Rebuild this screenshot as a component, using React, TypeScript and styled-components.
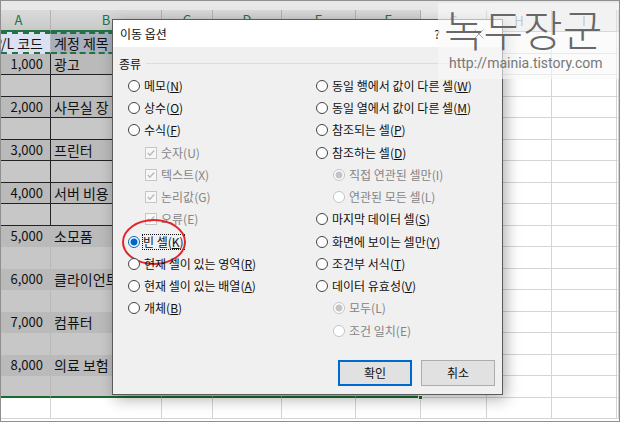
import React from 'react';
import styled, { createGlobalStyle, css } from 'styled-components';

const GlobalStyle = createGlobalStyle`
  * { box-sizing: border-box; }
  body {
    margin: 0;
    background: #fff;
    color: #111;
    font-family: "Noto Sans CJK KR", "Noto Sans", sans-serif;
    font-size: 12px;
  }
`;

const Workspace = styled.main`
  position: relative;
  min-height: 100vh;
  overflow: hidden;
  border: 1px solid #8f8f8f;
  border-width: 1px;
  background: #fff;
`;

const RibbonEdge = styled.div`
  height: 9px;
  background: #e8e8e8;
`;

const Sheet = styled.table`
  width: 100%;
  table-layout: fixed;
  border-collapse: separate;
  border-spacing: 0;
`;

const Column = styled.col<{ $width?: number }>`
  width: ${(p) => (p.$width ? `${p.$width}px` : 'auto')};
`;

const ColumnHead = styled.th<{ $selected?: boolean }>`
  height: 22px;
  padding: 0;
  overflow: hidden;
  font-size: 13px;
  line-height: 18px;
  font-weight: 400;
  color: ${(p) => (p.$selected ? '#217346' : '#6c7c92')};
  background: ${(p) => (p.$selected ? 'linear-gradient(#dadada, #c9c9c9)' : '#e9e9e9')};
  border-right: 1px solid #b2b2b2;
  border-bottom: ${(p) => (p.$selected ? '2px solid #217346' : '1px solid #a8a8a8')};
  &:first-child { padding-right: 14px; }
`;

type CellKind = 'title' | 'dark' | 'light' | 'blank';

const fills: Record<CellKind, string> = {
  title: '#a9afbd',
  dark: '#bababa',
  light: '#c7c7c7',
  blank: '#fff',
};

const SheetRow = styled.tr`
  height: 22px;
  &:nth-child(even) { height: 21px; }
`;

const Cell = styled.td<{ $kind: CellKind; $number?: boolean; $ruled?: boolean; $last?: boolean }>`
  height: inherit;
  padding: 0 7px 0 3px;
  overflow: hidden;
  white-space: nowrap;
  font-size: ${(p) => (p.$number ? 13 : 14)}px;
  line-height: 18px;
  text-align: ${(p) => (p.$number ? 'right' : 'left')};
  background: ${(p) => fills[p.$kind]};
  border-right: 1px solid ${(p) => (p.$ruled ? '#222' : p.$kind === 'blank' ? '#d4d4d4' : '#b8b8b8')};
  border-bottom: 1px solid
    ${(p) => (p.$ruled ? '#222' : p.$kind === 'blank' ? '#d4d4d4' : 'transparent')};
  ${(p) =>
    p.$kind === 'title' &&
    css`
      border-top: 2px dashed #217346;
      border-bottom: 2px dashed #217346;
      line-height: 17px;
    `}
  ${(p) => p.$last && css`border-bottom: 2px solid #1c6b2e;`}
  &:first-child {
    ${(p) => p.$kind === 'title' && css`background: #dbe1f2;`}
  }
`;

const ClippedTitle = styled.span`
  display: flex;
  justify-content: flex-end;
`;

const FillHandle = styled.span`
  position: absolute;
  left: 417px;
  top: 394px;
  width: 5px;
  height: 5px;
  border: 1px solid #fff;
  background: #1c6b2e;
`;

const Dialog = styled.section`
  position: absolute;
  top: 18px;
  left: 111px;
  right: 116px;
  border: 1px solid #5b5b5b;
  background: #f0f0f0;
  box-shadow: 3px 4px 14px rgba(0, 0, 0, 0.32);
`;

const TitleBar = styled.header`
  display: flex;
  align-items: center;
  height: 27px;
  padding: 0 16px 0 7px;
  background: #fff;
`;

const DialogTitle = styled.h1`
  flex: 1;
  margin: 0;
  font-size: 12px;
  font-weight: 400;
`;

const TitleButton = styled.button`
  display: flex;
  align-items: center;
  justify-content: center;
  width: 14px;
  height: 20px;
  margin-left: 28px;
  padding: 0;
  border: 0;
  background: none;
  color: #222;
  font: inherit;
`;

const Group = styled.fieldset`
  margin: 0;
  padding: 7px 7px 0 6px;
  border: 0;
`;

const GroupTitle = styled.div`
  display: flex;
  align-items: center;
  gap: 5px;
  height: 18px;
  &::after {
    content: "";
    flex: 1;
    border-top: 1px solid #dcdcdc;
  }
`;

const Columns = styled.div`
  display: grid;
  grid-template-columns: 188px 1fr;
  padding: 3px 0 0 9px;
`;

const OptionList = styled.div`
  display: flex;
  flex-direction: column;
`;

const Option = styled.label<{ $nested?: boolean; $disabled?: boolean }>`
  position: relative;
  display: flex;
  align-items: center;
  gap: 4px;
  height: 22px;
  padding-left: ${(p) => (p.$nested ? 17 : 0)}px;
  color: ${(p) => (p.$disabled ? '#858585' : '#111')};
  white-space: nowrap;
  &:nth-child(4n + 3) { margin-bottom: 1px; }
`;

const Radio = styled.input.attrs({ type: 'radio' })`
  appearance: none;
  flex: none;
  width: 12px;
  height: 12px;
  margin: 0;
  border: 1px solid #444;
  border-radius: 50%;
  background: #fff;
  &:checked {
    border-color: #0067c5;
    background: radial-gradient(circle, #0067c5 0 3px, #fff 4px);
  }
  &:disabled { border-color: #c4c4c4; }
  &:disabled:checked { background: radial-gradient(circle, #c4c4c4 0 3px, #fff 4px); }
`;

const CheckWrap = styled.span`
  display: grid;
  flex: none;
  width: 12px;
  height: 12px;
  > * { grid-area: 1 / 1; }
`;

const Checkbox = styled.input.attrs({ type: 'checkbox' })`
  appearance: none;
  width: 12px;
  height: 12px;
  margin: 0;
  border: 1px solid #c6c6c6;
  background: #f7f7f7;
`;

const OptionText = styled.span<{ $focused?: boolean }>`
  line-height: 16px;
  ${(p) => p.$focused && css`
    margin-left: -2px;
    padding: 0 1px;
    outline: 1px dotted #111;
    outline-offset: -1px;
  `}
`;

const Highlight = styled.svg`
  position: absolute;
  left: -7px;
  top: -13px;
  width: 66px;
  height: 48px;
  pointer-events: none;
`;

const Actions = styled.footer`
  display: flex;
  justify-content: flex-end;
  gap: 9px;
  padding: 18px 7px 8px;
`;

const ActionButton = styled.button<{ $primary?: boolean }>`
  width: 74px;
  height: 26px;
  padding: 0;
  border: ${(p) => (p.$primary ? '2px solid #0069d0' : '1px solid #adadad')};
  background: #e1e1e1;
  color: #111;
  font: inherit;
  line-height: 20px;
`;

const Watermark = styled.aside`
  position: absolute;
  top: 2px;
  right: 0;
  width: 181px;
  height: 76px;
  padding-left: 6px;
  background: rgba(248, 248, 248, 0.6);
  white-space: nowrap;
`;

const Brand = styled.div`
  height: 51px;
  color: #686868;
  font-size: 43px;
  line-height: 51px;
  font-weight: 300;
`;

const SiteLink = styled.a`
  display: block;
  margin-left: 5px;
  color: #777;
  font-family: Roboto, "Liberation Sans", sans-serif;
  font-size: 14px;
  line-height: 18px;
  font-weight: 400;
  text-decoration: none;
`;

const columns: [string, number][] = [
  ['A', 50], ['B', 111], ['C', 51], ['D', 69], ['E', 74], ['F', 65], ['G', 66], ['H', 65], ['I', 65],
];

const accounts = ['광고', '사무실 장', '프린터', '서버 비용', '소모품', '클라이언트', '컴퓨터', '의료 보험'];

interface OptionItem {
  text: string;
  hotkey: string;
  kind?: 'check' | 'radio';
  disabled?: boolean;
  checked?: boolean;
  group?: string;
}

const leftOptions: OptionItem[] = [
  { text: '메모', hotkey: 'N' },
  { text: '상수', hotkey: 'O' },
  { text: '수식', hotkey: 'F' },
  { text: '숫자', hotkey: 'U', kind: 'check', disabled: true },
  { text: '텍스트', hotkey: 'X', kind: 'check', disabled: true },
  { text: '논리값', hotkey: 'G', kind: 'check', disabled: true },
  { text: '오류', hotkey: 'E', kind: 'check', disabled: true },
  { text: '빈 셀', hotkey: 'K', checked: true },
  { text: '현재 셀이 있는 영역', hotkey: 'R' },
  { text: '현재 셀이 있는 배열', hotkey: 'A' },
  { text: '개체', hotkey: 'B' },
];

const rightOptions: OptionItem[] = [
  { text: '동일 행에서 값이 다른 셀', hotkey: 'W' },
  { text: '동일 열에서 값이 다른 셀', hotkey: 'M' },
  { text: '참조되는 셀', hotkey: 'P' },
  { text: '참조하는 셀', hotkey: 'D' },
  { text: '직접 연관된 셀만', hotkey: 'I', disabled: true, checked: true, group: 'depth' },
  { text: '연관된 모든 셀', hotkey: 'L', disabled: true, group: 'depth' },
  { text: '마지막 데이터 셀', hotkey: 'S' },
  { text: '화면에 보이는 셀만', hotkey: 'Y' },
  { text: '조건부 서식', hotkey: 'T' },
  { text: '데이터 유효성', hotkey: 'V' },
  { text: '모두', hotkey: 'L', disabled: true, checked: true, group: 'match' },
  { text: '조건 일치', hotkey: 'E', disabled: true, group: 'match' },
];

function OptionRow({ item }: { item: OptionItem }) {
  const focused = item.checked && !item.disabled;
  return (
    <Option $nested={item.disabled} $disabled={item.disabled}>
      {item.kind === 'check' ? (
        <CheckWrap>
          <Checkbox defaultChecked disabled />
          <svg width="12" height="12" viewBox="0 0 13 13" fill="none" stroke="#b8b8b8" strokeWidth="1.4" aria-hidden="true">
            <path d="M3 6.5 5.3 9 10 3.8" />
          </svg>
        </CheckWrap>
      ) : (
        <Radio name={item.group ?? 'target'} defaultChecked={item.checked} disabled={item.disabled} />
      )}
      <OptionText $focused={focused}>
        {item.text}({item.disabled ? item.hotkey : <u>{item.hotkey}</u>})
      </OptionText>
      {focused && (
        <Highlight viewBox="0 0 66 48" aria-hidden="true">
          <ellipse cx="33" cy="24" rx="31" ry="22" fill="none" stroke="#e0252b" strokeWidth="2" />
        </Highlight>
      )}
    </Option>
  );
}

function SheetRows() {
  return (
    <tbody>
      <SheetRow>
        <Cell $kind="title"><ClippedTitle>P/L 코드</ClippedTitle></Cell>
        <Cell $kind="title">계정 제목</Cell>
        {columns.slice(2, 6).map(([c]) => <Cell key={c} $kind="title" />)}
        {[0, 1, 2, 3].map((c) => <Cell key={c} $kind="blank" />)}
      </SheetRow>
      {Array.from({ length: 16 }, (_, i) => {
        const named = i % 2 === 0;
        const kind: CellKind = named ? 'dark' : 'light';
        const ruled = i < 8;
        const last = i === 15;
        return (
          <SheetRow key={i}>
            <Cell $kind={kind} $ruled={ruled} $last={last} $number>{named ? `${i / 2 + 1},000` : ''}</Cell>
            <Cell $kind={kind} $ruled={ruled} $last={last}>{named ? accounts[i / 2] : ''}</Cell>
            {columns.slice(2, 6).map(([c]) => <Cell key={c} $kind={kind} $ruled={ruled} $last={last} />)}
            {[0, 1, 2, 3].map((c) => <Cell key={c} $kind="blank" />)}
          </SheetRow>
        );
      })}
      <SheetRow>
        {Array.from({ length: 10 }, (_, c) => <Cell key={c} $kind="blank" />)}
      </SheetRow>
    </tbody>
  );
}

export default function App() {
  return (
    <Workspace>
      <GlobalStyle />
      <RibbonEdge />
      <Sheet>
        <colgroup>
          {columns.map(([name, width]) => <Column key={name} $width={width} />)}
          <Column />
        </colgroup>
        <thead>
          <tr>
            {columns.map(([name], i) => <ColumnHead key={name} $selected={i < 6}>{name}</ColumnHead>)}
            <ColumnHead />
          </tr>
        </thead>
        <SheetRows />
      </Sheet>
      <FillHandle />
      <Dialog role="dialog" aria-labelledby="dialog-title">
        <TitleBar>
          <DialogTitle id="dialog-title">이동 옵션</DialogTitle>
          <TitleButton type="button">?</TitleButton>
          <TitleButton type="button" aria-label="닫기">
            <svg width="10" height="10" viewBox="0 0 10 10" stroke="#333" aria-hidden="true">
              <path d="M.5.5l9 9M9.500.5l-9 9" />
            </svg>
          </TitleButton>
        </TitleBar>
        <Group aria-labelledby="group-title">
          <GroupTitle id="group-title">종류</GroupTitle>
          <Columns>
            <OptionList>
              {leftOptions.map((item) => <OptionRow key={item.text} item={item} />)}
            </OptionList>
            <OptionList>
              {rightOptions.map((item) => <OptionRow key={item.text} item={item} />)}
            </OptionList>
          </Columns>
        </Group>
        <Actions>
          <ActionButton type="button" $primary>확인</ActionButton>
          <ActionButton type="button">취소</ActionButton>
        </Actions>
      </Dialog>
      <Watermark>
        <Brand>녹두장군</Brand>
        <SiteLink href="http://mainia.tistory.com">http://mainia.tistory.com</SiteLink>
      </Watermark>
    </Workspace>
  );
}
